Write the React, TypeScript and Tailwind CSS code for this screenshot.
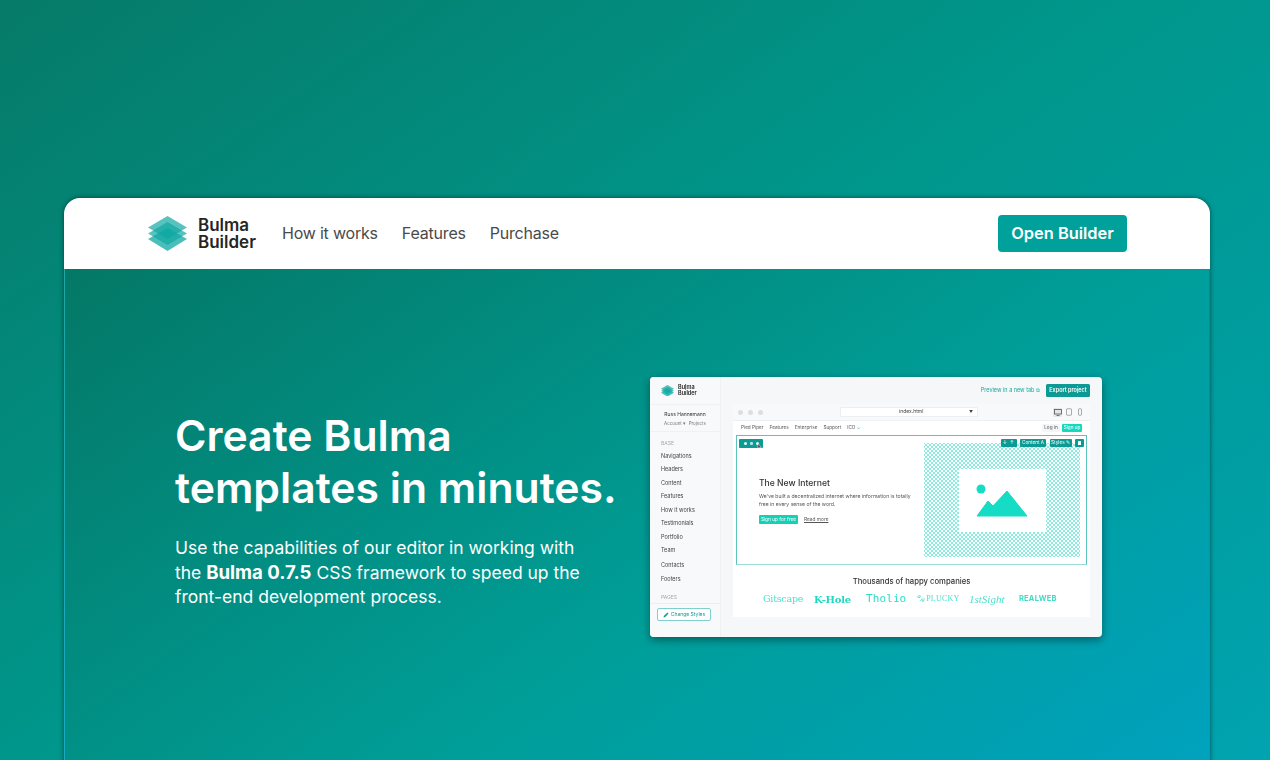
import React from 'react';

const sideLinks = [
    { label: 'Navigations', h: 'h-[13.5px]' },
    { label: 'Headers', h: 'h-[13.5px]' },
    { label: 'Content', h: 'h-[13.5px]' },
    { label: 'Features', h: 'h-[13.5px]' },
    { label: 'How it works', h: 'h-[13.5px]' },
    { label: 'Testimonials', h: 'h-[13.5px]' },
    { label: 'Portfolio', h: 'h-[13.5px]' },
    { label: 'Team', h: 'h-[14px]' },
    { label: 'Contacts', h: 'h-[14.5px]' },
    { label: 'Footers', h: 'h-[13.5px]' },
];

const Logo: React.FC<{ size: number }> = ({ size }) => (
    <svg width={size} height={size * 35 / 39} viewBox="0 0 39 35" className="shrink-0">
        <polygon points="19.5,12 39,23 19.5,35 0,23" fill="#10a8a2" fillOpacity="0.75" />
        <polygon points="19.5,6 39,17.5 19.5,29 0,17.5" fill="#10a8a2" fillOpacity="0.7" />
        <polygon points="19.5,0 39,11.5 19.5,23 0,11.5" fill="#10a8a2" fillOpacity="0.7" />
    </svg>
);

const Mockup: React.FC = () => (
    <div className="w-[452px] h-[260px] shrink-0 rounded-[4px] bg-[#f5f7f8] shadow-[0_3px_8px_rgba(0,0,0,0.4)] flex overflow-hidden font-['Inter',sans-serif] blur-[0.35px]">
        {/* sidebar */}
        <aside className="w-[71px] shrink-0 bg-[#f8f9fa] border-r border-[#eef0f2] flex flex-col text-[#444]">
            <div className="h-[28px] shrink-0 flex items-center pl-[11px] gap-[4px] border-b border-[#f0f1f3]">
                <Logo size={13} />
                <div className="text-[5.5px] leading-[5.5px] font-semibold text-[#222]">Bulma<br />Builder</div>
            </div>
            <div className="h-[27px] shrink-0 flex flex-col items-center pt-[5px] border-b border-[#f0f1f3]">
                <div className="text-[5px] leading-[9px] text-[#333]">Russ Hannemann</div>
                <div className="text-[4.5px] leading-[9px] text-[#777]">Account ▾&nbsp;&nbsp;Projects</div>
            </div>
            <div className="pl-[11px] pt-[5px] text-[5px] leading-[12px] text-[#aaa]">BASE</div>
            <div className="pl-[11px] flex flex-col">
                {sideLinks.map((l) => (
                    <div key={l.label} className={`${l.h} flex items-center text-[5.5px] text-[#444]`}>{l.label}</div>
                ))}
            </div>
            <div className="pl-[11px] pt-[6.5px] text-[5px] leading-[10px] text-[#aaa]">PAGES</div>
            <div className="mt-[1px] border-t border-[#eceef0] pl-[7px] pt-[4px]">
                <div className="w-[54px] h-[13px] rounded-[2px] border border-[#7fd0cc] bg-white flex items-center justify-center gap-[2px] text-[5px] text-[#0c9a94]">
                    <svg width="6" height="6" viewBox="0 0 6 6"><path d="M0.5 5.5 L1 3.8 L4.5 0.5 L5.5 1.4 L2.2 5 Z" fill="#0c9a94" /></svg>
                    Change Styles
                </div>
            </div>
        </aside>

        {/* editor */}
        <div className="flex-1 min-w-0 flex flex-col pl-[12px] pr-[12px]">
            <div className="h-[27px] shrink-0 flex items-center justify-end gap-[6px]">
                <span className="text-[5.5px] text-[#19a7a0]">Preview in a new tab ⧉</span>
                <div className="w-[44px] h-[13px] rounded-[1.5px] bg-[#0c9a94] text-white text-[5.5px] font-semibold flex items-center justify-center">Export project</div>
            </div>
            <div className="w-[357px] h-[213px] bg-white flex flex-col">
                {/* browser toolbar */}
                <div className="h-[17px] shrink-0 bg-[#f8f9fa] border-b border-[#eef0f2] flex items-center pl-[5px] pr-[6px]">
                    <div className="flex gap-[5px] w-[102px]">
                        <span className="w-[5px] h-[5px] rounded-full bg-[#dcdfe2]" />
                        <span className="w-[5px] h-[5px] rounded-full bg-[#dcdfe2]" />
                        <span className="w-[5px] h-[5px] rounded-full bg-[#dcdfe2]" />
                    </div>
                    <div className="w-[138px] h-[10px] rounded-[1px] bg-white border border-[#eceef0] flex items-center justify-between pl-[58px] pr-[4px] text-[5px] text-[#444]">
                        <span>index.html</span>
                        <span className="text-[4px]">▼</span>
                    </div>
                    <div className="ml-auto flex items-center gap-[3px]">
                        <div className="w-[9px] h-[9px] bg-[#e4e6e8] rounded-[1px] flex items-center justify-center">
                            <svg width="8" height="7" viewBox="0 0 8 7" fill="none" stroke="#555" strokeWidth="0.8"><rect x="0.5" y="0.5" width="7" height="4.5" /><path d="M2.5 6.5h3" /></svg>
                        </div>
                        <svg width="8" height="8" viewBox="0 0 8 8" fill="none" stroke="#888" strokeWidth="0.7"><rect x="1.5" y="0.8" width="5" height="6.4" rx="0.6" /></svg>
                        <svg width="8" height="8" viewBox="0 0 8 8" fill="none" stroke="#888" strokeWidth="0.7"><rect x="2.5" y="0.8" width="3" height="6.4" rx="0.6" /></svg>
                    </div>
                </div>
                {/* site nav */}
                <div className="h-[14px] shrink-0 flex items-center pl-[8px] pr-[8px] gap-[6px] text-[4.7px] text-[#555]">
                    <span>Pied Piper</span>
                    <span>Features</span>
                    <span>Enterprise</span>
                    <span>Support</span>
                    <span>ICO <span className="text-[#19a7a0]">⌄</span></span>
                    <span className="ml-auto w-[18px] h-[8px] rounded-[1px] bg-[#f4f5f6] flex items-center justify-center">Log in</span>
                    <span className="-ml-[4px] w-[20px] h-[8px] rounded-[1px] bg-[#14d9bf] text-white flex items-center justify-center">Sign up</span>
                </div>
                {/* selected hero */}
                <div className="relative mx-[3px] h-[130px] shrink-0 border border-[#5cc4be] border-b-[#9adcd8] flex">
                    <div className="absolute left-[2px] top-[3px] w-[24px] h-[9px] rounded-[1px] bg-[#0c9a94] flex items-center justify-center gap-[3px]">
                        <span className="w-[3px] h-[3px] rounded-full bg-white/90" />
                        <span className="w-[3px] h-[3px] rounded-[1px] bg-white/70" />
                        <span className="w-[3px] h-[3px] rounded-full bg-white/90" />
                    </div>
                    <svg className="absolute left-[20px] top-[7px]" width="5" height="7" viewBox="0 0 5 7">
                        <path d="M1 0.5 L1 5.5 L2.2 4.4 L4.2 4.4 Z" fill="#333" stroke="white" strokeWidth="0.5" />
                    </svg>
                    <div className="absolute right-[2px] top-[3px] flex gap-[3.5px] text-[4.7px] text-white">
                        <span className="w-[16px] h-[8px] bg-[#0c9a94] rounded-[1px] flex items-center justify-center gap-[3px]"><span>↓</span><span>↑</span></span>
                        <span className="w-[26px] h-[8px] bg-[#0c9a94] rounded-[1px] flex items-center justify-center">Content A</span>
                        <span className="w-[22px] h-[8px] bg-[#0c9a94] rounded-[1px] flex items-center justify-center">Styles ✎</span>
                        <span className="w-[9px] h-[8px] bg-[#0c9a94] rounded-[1px] flex items-center justify-center"><span className="w-[3.5px] h-[4px] bg-white rounded-[0.5px]" /></span>
                    </div>
                    <div className="w-[187px] shrink-0 pl-[22px] pt-[42px]">
                        <div className="text-[8.6px] leading-[11px] font-medium text-[#333]">The New Internet</div>
                        <div className="mt-[3px] text-[5.1px] leading-[8px] text-[#555]">We've built a decentralized internet where information is totally<br />free in every sense of the word.</div>
                        <div className="mt-[7px] flex items-center gap-[6px] text-[4.8px]">
                            <span className="w-[39px] h-[9px] rounded-[1px] bg-[#14d0b4] text-white flex items-center justify-center">Sign up for free</span>
                            <span className="text-[#555] underline">Read more</span>
                        </div>
                    </div>
                    <div className="my-[7px] w-[156px] flex items-center justify-center bg-[radial-gradient(#86ecdf_0.7px,transparent_0.9px),radial-gradient(#86ecdf_0.7px,transparent_0.9px)] bg-[length:4px_4px] bg-[position:0_0,2px_2px]">
                        <div className="w-[87px] h-[63px] bg-white flex items-center justify-center">
                            <svg width="52" height="33" viewBox="0 0 52 33">
                                <circle cx="5" cy="5" r="4.5" fill="#14dcc5" />
                                <polygon points="1,32 12,17 17,22 31,7 51,32" stroke="#14dcc5" strokeWidth="1" strokeLinejoin="round" fill="#14dcc5" />
                            </svg>
                        </div>
                    </div>
                </div>
                {/* logos */}
                <div className="pt-[12px] text-center text-[7.7px] leading-[10px] text-[#333] font-medium">Thousands of happy companies</div>
                <div className="mt-[6px] pl-[30px] flex items-center text-[#4fe0cc] h-[12px]">
                    <span className="w-[51px] font-['DejaVu_Serif',serif] text-[9.5px] tracking-tight">Gitscape</span>
                    <span className="w-[52px] font-['DejaVu_Serif',serif] font-bold text-[10px] tracking-tight text-[#1fd8c0]">K-Hole</span>
                    <span className="w-[50px] font-['DejaVu_Sans_Mono',monospace] text-[11px] tracking-[0.1px] text-[#2edcc6]">Tholio</span>
                    <span className="w-[53px] font-['Liberation_Serif',serif] text-[8px] tracking-wide">🐾︎PLUCKY</span>
                    <span className="w-[50px] font-['Liberation_Serif',serif] italic text-[11px]">1stSight</span>
                    <span className="font-['Inter',sans-serif] font-bold text-[7.5px] tracking-wide text-[#3edcc6]">REALWEB</span>
                </div>
            </div>
        </div>
    </div>
);

const App: React.FC = () => {
    return (
        <div className="h-[760px] overflow-hidden pt-[198px] pl-[64px] pr-[60px] bg-[linear-gradient(145deg,#067a68_0%,#00978c_48%,#00a3b0_100%)] font-['Inter',sans-serif]">
            <div className="h-[640px] rounded-t-[16px] shadow-[0_0_5px_rgba(0,0,0,0.5)] flex flex-col">
                <nav className="h-[71px] shrink-0 bg-white rounded-t-[16px] flex items-center pl-[84px] pr-[83px]">
                    <Logo size={39} />
                    <div className="ml-[11px] text-[17px] leading-[17px] font-semibold text-[#252525]">Bulma<br />Builder</div>
                    <div className="ml-[26px] -mt-[1px] flex gap-[24px] text-[16px] tracking-[-0.2px] text-[#4a4a4a]">
                        <a>How it works</a>
                        <a>Features</a>
                        <a>Purchase</a>
                    </div>
                    <a className="ml-auto w-[129px] h-[37px] rounded-[4px] bg-[#00a19b] text-white text-[16.4px] font-semibold flex items-center justify-center">Open Builder</a>
                </nav>
                <section className="flex-1 border-x border-white/10 flex items-start pl-[110px] pt-[108px] bg-[linear-gradient(145deg,#047866_0%,#009e98_55%,#00a2c0_97%)]">
                    <div className="w-[475px] shrink-0 text-white pt-[33px]">
                        <h1 className="text-[42.7px] leading-[52px] font-semibold whitespace-nowrap">Create Bulma<br />templates in minutes.</h1>
                        <p className="mt-[22px] text-[17.5px] leading-[24px]">Use the capabilities of our editor in working with<br />the <b className="text-[18.6px]">Bulma 0.7.5</b> CSS framework to speed up the<br />front-end development process.</p>
                    </div>
                    <Mockup />
                </section>
            </div>
        </div>
    );
};

export default App;
